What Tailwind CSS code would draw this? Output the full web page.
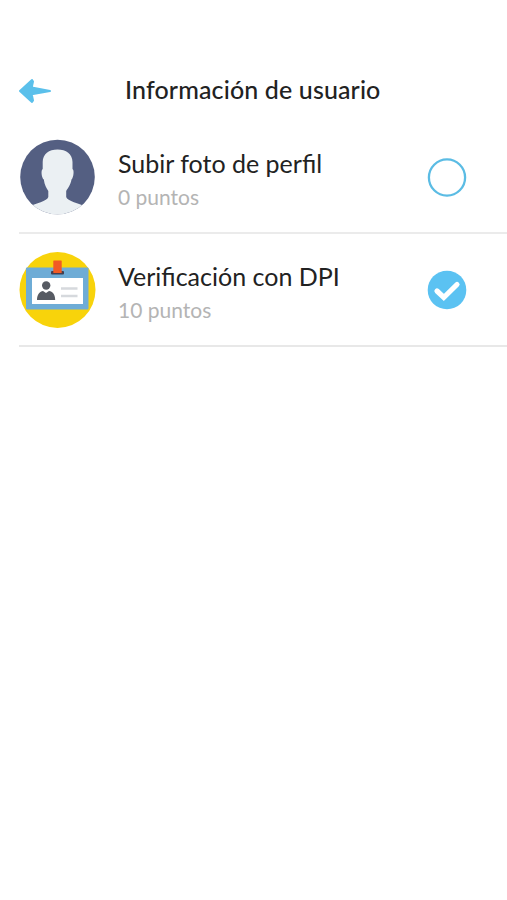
<!DOCTYPE html>
<html lang="es">

<head>
    <meta charset="UTF-8">
    <meta name="viewport" content="width=device-width, initial-scale=1.0">
    <title>Información de usuario</title>
    <script src="https://cdn.jsdelivr.net/npm/@tailwindcss/browser@4"></script>
</head>

<body class="bg-white min-h-screen overflow-x-hidden font-['Lato','Noto_Sans',sans-serif] text-[#222222]">
    <header class="flex items-center h-[60px] mt-[61px] pl-[18px] whitespace-nowrap">
        <button class="w-[34px] mr-[73px]" aria-label="Volver">
            <svg class="block" width="34" height="28" viewBox="0 0 34 28" fill="#5bc0eb" stroke="#5bc0eb" stroke-width="2" stroke-linejoin="round">
                <path d="M2 14 L14 3 L15 4.5 L13.7 10.6 L32 14 L13.7 17.2 L15 23.5 L14 25 Z" />
            </svg>
        </button>
        <h1 class="text-[25px] font-medium tracking-[0.13px] pb-0.5">Información de usuario</h1>
    </header>

    <main class="pl-[19px]">
        <div class="flex items-center h-[113px] border-b-2 border-[#ebebeb]">
            <svg class="shrink-0" width="77" height="76" viewBox="0 0 77 76">
                <defs>
                    <clipPath id="avatar">
                        <circle cx="38.5" cy="38" r="37.3" />
                    </clipPath>
                </defs>
                <g clip-path="url(#avatar)">
                    <rect width="77" height="76" fill="#545f82" />
                    <path d="M38.5 10.5 C47 10.5 53.5 15 53.5 23 V30 C55.5 31 54.5 39 52.5 40.5 C51.5 46 49 49 47.2 52 V58 C48 62 61 65 65.5 67 V76 H11 V67 C16 65 28.5 62 29.3 58 V52 C27.5 49 25.5 46 24.8 40.5 C22.5 39 21.7 31 23.7 30 V23 C23.7 15 30 10.5 38.5 10.5 Z" fill="#ebf0f3" />
                </g>
            </svg>
            <div class="ml-[22px] w-[309px] pt-1.5 whitespace-nowrap">
                <p class="text-[25px] leading-[34px]">Subir foto de perfil</p>
                <p class="text-[21px] leading-[34px] text-[#b4b4b4]">0 puntos</p>
            </div>
            <svg class="shrink-0" width="40" height="40" viewBox="0 0 40 40">
                <circle cx="20" cy="20.5" r="18.1" fill="none" stroke="#5bbce4" stroke-width="2.3" />
            </svg>
        </div>

        <div class="flex items-center h-[113px] border-b-2 border-[#e8e8e8]">
            <svg class="shrink-0" width="77" height="76" viewBox="0 0 77 76">
                <circle cx="38.5" cy="38" r="38" fill="#f8d30b" />
                <rect x="7" y="15.5" width="62.5" height="42" rx="1" fill="#6eacd6" />
                <rect x="13" y="26" width="51" height="26" fill="#ffffff" />
                <rect x="32" y="19" width="13" height="3.5" rx="1" fill="#433f50" />
                <rect x="34.3" y="8.5" width="8.4" height="12.5" rx="0.5" fill="#f15a24" />
                <circle cx="27.2" cy="33.5" r="4.2" fill="#575b63" />
                <path d="M18 48 C18 42 21 39.5 24 39 L27 41 L30 39 C33.5 39.5 36.2 42 36.2 48 Z" fill="#575b63" />
                <path d="M42 36.5 H58.5 M42 44 H58.5" stroke="#d6d9dd" stroke-width="2.5" />
            </svg>
            <div class="ml-[22px] w-[309px] pt-1.5 whitespace-nowrap">
                <p class="text-[25px] leading-[34px]">Verificación con DPI</p>
                <p class="text-[21px] leading-[34px] text-[#b4b4b4]">10 puntos</p>
            </div>
            <svg class="shrink-0" width="40" height="40" viewBox="0 0 40 40">
                <circle cx="20" cy="20" r="19.3" fill="#5bc2f2" />
                <path d="M10 21 L16.8 27.5 L30 14.5" fill="none" stroke="#ffffff" stroke-width="5.2" stroke-linejoin="miter" stroke-linecap="round" />
            </svg>
        </div>
    </main>
</body>

</html>
